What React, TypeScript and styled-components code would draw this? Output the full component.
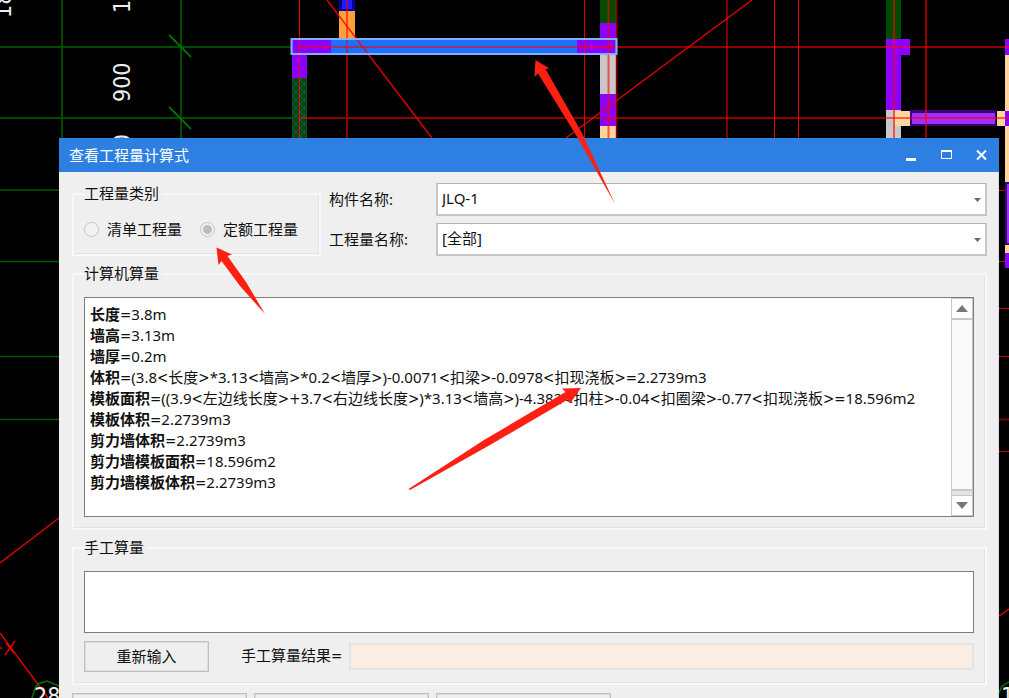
import React, { useState } from "react";
import styled, { createGlobalStyle } from "styled-components";

const GlobalStyle = createGlobalStyle`
  * { box-sizing: border-box; }
  body {
    margin: 0;
    background: #000;
    color: #111;
    font: 15px/20px "Noto Sans", "Noto Sans CJK SC", sans-serif;
  }
  button, select, input, textarea { font: inherit; color: inherit; margin: 0; }
`;

const Page = styled.main`
  position: relative;
  height: 100vh;
  overflow: hidden;
  padding: 138px 10px 0 59px;
`;

const Canvas = styled.svg`
  position: absolute;
  inset: 0;
  width: 100%;
  height: 100%;
`;

const Markup = styled(Canvas)`
  pointer-events: none;
  fill: #ff2013;
`;

const CanvasText = styled.text`
  font: 23px "DejaVu Sans Condensed", "DejaVu Sans", sans-serif;
  fill: #eee;
`;

const Dialog = styled.section`
  position: relative;
  background: #efefef;
`;

const TitleBar = styled.header`
  display: flex;
  align-items: center;
  height: 34px;
  padding-left: 10px;
  background: #2d7fe2;
  color: #fff;
`;

const Title = styled.h1`
  flex: 1;
  margin: 0;
  font-size: 15px;
  font-weight: 400;
`;

const WindowButton = styled.button`
  display: grid;
  place-items: center;
  width: 35px;
  height: 34px;
  padding: 0;
  border: 0;
  background: none;
`;

const Body = styled.div`
  display: flex;
  flex-direction: column;
  gap: 8px;
  padding: 11px 11px 12px 13px;
  border-right: 1px solid #d3deea;
`;

const TopRow = styled.div`
  display: flex;
  align-items: flex-end;
  gap: 8px;
`;

const Group = styled.fieldset<{ $width?: number }>`
  width: ${(p) => (p.$width ? `${p.$width}px` : "auto")};
  min-width: 0;
  margin: 0;
  padding: 13px 11px 11px 10px;
  border: 2px solid #f8f8f8;
  box-shadow: inset -1px -1px 0 #e2e2e2;
`;

const Legend = styled.legend`
  height: 20px;
  padding: 0 3px 0 0;
  line-height: 18px;
`;

const RadioRow = styled.div`
  display: flex;
  gap: 18px;
  padding: 2px 0 4px;
`;

const RadioLabel = styled.label`
  display: flex;
  align-items: center;
  gap: 8px;
  white-space: nowrap;
`;

const Radio = styled.input`
  appearance: none;
  width: 15px;
  height: 15px;
  border: 1px solid #c2c2c2;
  border-radius: 50%;
  background: #f3f3f3;
  &:checked {
    background: radial-gradient(circle, #bdbdbd 4px, #f3f3f3 5px);
  }
`;

const Fields = styled.div`
  flex: 1;
  display: grid;
  grid-template-columns: 107px 1fr;
  row-gap: 7px;
  align-items: center;
`;

const FieldLabel = styled.label`
  padding-bottom: 2px;
`;

const SelectBox = styled.div`
  display: grid;
  align-items: center;
  > * { grid-area: 1 / 1; }
  > svg { justify-self: end; margin-right: 6px; pointer-events: none; }
`;

const Select = styled.select`
  appearance: none;
  width: 100%;
  height: 33px;
  padding: 0 24px 2px 4px;
  border: 2px solid #c6c6c6;
  border-top: 1px solid #b4b4b4;
  border-radius: 0;
  background: #fff;
`;

const Results = styled.div`
  display: flex;
  height: 220px;
  border: 1px solid #7d7d7d;
  background: #fff;
`;

const Lines = styled.div`
  flex: 1;
  min-width: 0;
  overflow: hidden;
  padding: 6px 5px;
`;

const Line = styled.p`
  margin: 0;
  height: 21px;
  line-height: 21px;
  white-space: nowrap;
`;

const Name = styled.strong`
  font-weight: 700;
`;

const Operator = styled.span`
  font-family: "DejaVu Sans Condensed", "DejaVu Sans", sans-serif;
`;

const ScrollBar = styled.div`
  display: flex;
  flex-direction: column;
  width: 22px;
  border: solid #c6c6c6;
  border-width: 0 1px;
  background: #e4e4e4;
`;

const ScrollButton = styled.button`
  display: grid;
  place-items: center;
  height: 21px;
  padding: 0;
  border: 1px solid #c9c9c9;
  border-width: 1px 0;
  background: #fff;
`;

const ScrollThumb = styled.div`
  flex: 1;
  margin-bottom: 4px;
  border: solid #c9c9c9;
  border-width: 1px 0 2px;
  background: #f9f9f9;
`;

const Formula = styled.textarea`
  display: block;
  width: 100%;
  height: 62px;
  padding: 4px;
  border: 1px solid #7d7d7d;
  border-radius: 0;
  background: #fff;
  resize: none;
`;

const ResultRow = styled.div`
  display: flex;
  align-items: center;
  gap: 7px;
  padding-top: 8px;
`;

const PushButton = styled.button<{ $width: number }>`
  width: ${(p) => p.$width}px;
  height: 31px;
  padding: 0 0 2px;
  border: 1px solid #c0c0c0;
  box-shadow: inset 0 0 0 1px #dcdcdc;
  border-radius: 0;
  background: #efefef;
`;

const ResultLabel = styled.label`
  padding: 0 0 2px 25px;
  white-space: nowrap;
`;

const ResultInput = styled.input`
  flex: 1;
  min-width: 0;
  height: 27px;
  border: 2px solid #e6e4e2;
  border-radius: 0;
  background: #faeee4;
`;

const Footer = styled.footer`
  display: flex;
  gap: 7px;
`;

const results: [string, string][] = [
  ["长度", "3.8m"],
  ["墙高", "3.13m"],
  ["墙厚", "0.2m"],
  ["体积", "(3.8<长度>*3.13<墙高>*0.2<墙厚>)-0.0071<扣梁>-0.0978<扣现浇板>=2.2739m3"],
  ["模板面积", "((3.9<左边线长度>+3.7<右边线长度>)*3.13<墙高>)-4.382<扣柱>-0.04<扣圈梁>-0.77<扣现浇板>=18.596m2"],
  ["模板体积", "2.2739m3"],
  ["剪力墙体积", "2.2739m3"],
  ["剪力墙模板面积", "18.596m2"],
  ["剪力墙模板体积", "2.2739m3"],
];

function Expression({ text }: { text: string }) {
  return (
    <>
      {text.split(/([<>=+])/).map((part, i) =>
        i % 2 ? <Operator key={i}>{part}</Operator> : part,
      )}
    </>
  );
}

function Drawing() {
  return (
    <Canvas aria-hidden="true">
      <defs>
        <pattern id="hatch" x="292" y="80" width="8" height="8" patternUnits="userSpaceOnUse">
          <rect width="8" height="8" fill="#004c00" />
          <path d="M0 0L8 8M8 0L0 8" stroke="#234a6c" strokeWidth="1" />
        </pattern>
      </defs>
      <g stroke="#004a00" strokeWidth="2">
        <path d="M0 47H299M0 118H299M62 0V138M181 0V138" />
        <path d="M0 190H59M0 261.500H59M0 356.500H59M0 419.500H59" stroke="#005a00" strokeWidth="1.500" />
        <path d="M169 35L191 57M169 107L191 129" stroke="#006e00" />
      </g>
      <CanvasText transform="translate(11 18) rotate(-90)">18</CanvasText>
      <CanvasText transform="translate(130 13) rotate(-90)">1</CanvasText>
      <CanvasText transform="translate(130 102) rotate(-90)">900</CanvasText>
      <CanvasText transform="translate(130 134) rotate(-90)" textAnchor="end">900</CanvasText>

      <rect x="339" y="0" width="16" height="11" fill="#00009c" />
      <rect x="342" y="0" width="10" height="9" fill="#1c1cff" />
      <rect x="339" y="11" width="16" height="28" fill="#ff9f3c" />
      <rect x="292" y="54" width="15" height="24" fill="#8b00ff" />
      <rect x="292" y="78" width="15" height="60" fill="url(#hatch)" />
      <rect x="600" y="0" width="16" height="23" fill="#004c00" />
      <rect x="600" y="23" width="16" height="16" fill="#8b00ff" />
      <rect x="600" y="55" width="16" height="39" fill="#c8c8c8" />
      <rect x="600" y="94" width="16" height="32" fill="#8b00ff" />
      <rect x="600" y="126" width="16" height="12" fill="#ffd59b" />
      <rect x="292" y="39" width="324" height="15" fill="#1a72ff" />
      <rect x="293" y="40" width="38" height="13" fill="#8b00ff" />
      <rect x="577" y="40" width="38" height="13" fill="#8b00ff" />

      <rect x="886" y="0" width="15" height="39" fill="#004c00" />
      <path d="M886 39H910V55H901V110H886Z" fill="#8b00ff" />
      <rect x="886" y="110" width="15" height="28" fill="#c8c8c8" />
      <rect x="895" y="111" width="15" height="15" fill="#ffd59b" />
      <rect x="910" y="110" width="86" height="16" fill="#3c0078" />
      <rect x="912" y="113" width="83" height="11" fill="#a12fff" />
      <rect x="997" y="111" width="8" height="15" fill="#ffd59b" />
      <rect x="1005" y="39" width="4" height="229" fill="#8b00ff" />
      <rect x="1005" y="55" width="4" height="56" fill="#ffd59b" />
      <rect x="1005" y="126" width="4" height="56" fill="#ffd59b" />
      <rect x="1005" y="182" width="4" height="63" fill="#3c0078" />
      <rect x="1007" y="184" width="2" height="59" fill="#a12fff" />
      <rect x="1005" y="245" width="4" height="8" fill="#ffd59b" />

      <g stroke="#ff0000" fill="none">
        <path d="M299 47H1009M299 118H1009M347 0V138" strokeWidth="2" strokeOpacity="0.560" />
        <path d="M616.500 0V138M727 0V138" strokeWidth="2" strokeOpacity="0.500" />
        <path d="M608.500 0V138M894 0V138M926 0V138" strokeWidth="2" strokeOpacity="0.600" />
        <path d="M299.500 0V138M584.500 0V138M774.500 0V138M798.500 0V138" strokeOpacity="0.880" />
        <path d="M327 0L432 138M566 138L752 0" strokeWidth="1.500" strokeOpacity="0.850" />
        <path d="M999 190.500H1005M999 261.500H1005M999 308.500H1009M999 356.500H1009M999 451.500H1009" strokeOpacity="0.800" />
        <path d="M999 419.500H1009" strokeWidth="2" strokeOpacity="0.450" />
        <path d="M0 563L59 518M0 633L48 698M999 616L1009 609M5 655L15 641M6 643L14 653M0 648H2" strokeWidth="1.500" strokeOpacity="0.850" />
      </g>
      <rect x="291.500" y="39" width="325" height="15" fill="none" stroke="#83adff" strokeWidth="2" />
      <path d="M32 698L35 688L38 684L47 681L59 686M999 693L1002 686L1009 682" fill="none" stroke="#007000" strokeWidth="1.500" />
      <CanvasText x="34" y="704">28</CanvasText>
      <CanvasText x="1001" y="704">1</CanvasText>
    </Canvas>
  );
}

export default function App() {
  const [kind, setKind] = useState("quota");
  return (
    <>
      <GlobalStyle />
      <Page>
        <Drawing />
        <Dialog role="dialog" aria-labelledby="dialog-title">
          <TitleBar>
            <Title id="dialog-title">查看工程量计算式</Title>
            <WindowButton type="button" aria-label="最小化">
              <svg width="11" height="11"><rect y="8" width="10" height="3" fill="#fff" /></svg>
            </WindowButton>
            <WindowButton type="button" aria-label="最大化">
              <svg width="11" height="10"><path d="M0 0H11V9H0ZM1 2V8H10V2Z" fill="#fff" fillRule="evenodd" /></svg>
            </WindowButton>
            <WindowButton type="button" aria-label="关闭">
              <svg width="11" height="10"><path d="M1 .5L10 9.500M10 .5L1 9.500" stroke="#fff" strokeWidth="2" /></svg>
            </WindowButton>
          </TitleBar>
          <Body>
            <TopRow>
              <Group $width={249}>
                <Legend>工程量类别</Legend>
                <RadioRow>
                  <RadioLabel>
                    <Radio type="radio" name="kind" checked={kind === "list"} onChange={() => setKind("list")} />
                    清单工程量
                  </RadioLabel>
                  <RadioLabel>
                    <Radio type="radio" name="kind" checked={kind === "quota"} onChange={() => setKind("quota")} />
                    定额工程量
                  </RadioLabel>
                </RadioRow>
              </Group>
              <Fields>
                <FieldLabel htmlFor="component">构件名称:</FieldLabel>
                <SelectBox>
                  <Select id="component"><option>JLQ-1</option></Select>
                  <svg width="7" height="4"><path d="M0 0H7L3.500 4Z" fill="#6c6c6c" /></svg>
                </SelectBox>
                <FieldLabel htmlFor="quantity">工程量名称:</FieldLabel>
                <SelectBox>
                  <Select id="quantity"><option>[全部]</option></Select>
                  <svg width="7" height="4"><path d="M0 0H7L3.500 4Z" fill="#6c6c6c" /></svg>
                </SelectBox>
              </Fields>
            </TopRow>
            <Group>
              <Legend>计算机算量</Legend>
              <Results>
                <Lines>
                  {results.map(([name, value]) => (
                    <Line key={name}><Name>{name}</Name><Expression text={`=${value}`} /></Line>
                  ))}
                </Lines>
                <ScrollBar>
                  <ScrollButton type="button" aria-label="向上滚动">
                    <svg width="12" height="7"><path d="M0 7H12L6 0Z" fill="#777" /></svg>
                  </ScrollButton>
                  <ScrollThumb />
                  <ScrollButton type="button" aria-label="向下滚动">
                    <svg width="12" height="7"><path d="M0 0H12L6 7Z" fill="#777" /></svg>
                  </ScrollButton>
                </ScrollBar>
              </Results>
            </Group>
            <Group>
              <Legend>手工算量</Legend>
              <Formula aria-label="手工算量" />
              <ResultRow>
                <PushButton type="button" $width={125}>重新输入</PushButton>
                <ResultLabel htmlFor="result"><Expression text="手工算量结果=" /></ResultLabel>
                <ResultInput id="result" readOnly />
              </ResultRow>
            </Group>
            <Footer>
              <PushButton type="button" $width={175} aria-label="查看计算规则" />
              <PushButton type="button" $width={175} aria-label="查看三维扣减图" />
              <PushButton type="button" $width={175} aria-label="显示详细计算式" />
            </Footer>
          </Body>
        </Dialog>
        <Markup aria-hidden="true">
          <path d="M535.500 60L549.500 68.500L545.500 69L582 133L615 204L576 135L538 73.500L534.500 77Z" />
          <path d="M216.500 247.500L232 254.500L227.500 256L246 282L265 314L240 286L221.500 261L218.500 265Z" />
          <path d="M581 388L562 388.500L565.500 392L484 440L408.500 489L410 490L490 445L568 399.500L570 403.500Z" />
        </Markup>
      </Page>
    </>
  );
}
